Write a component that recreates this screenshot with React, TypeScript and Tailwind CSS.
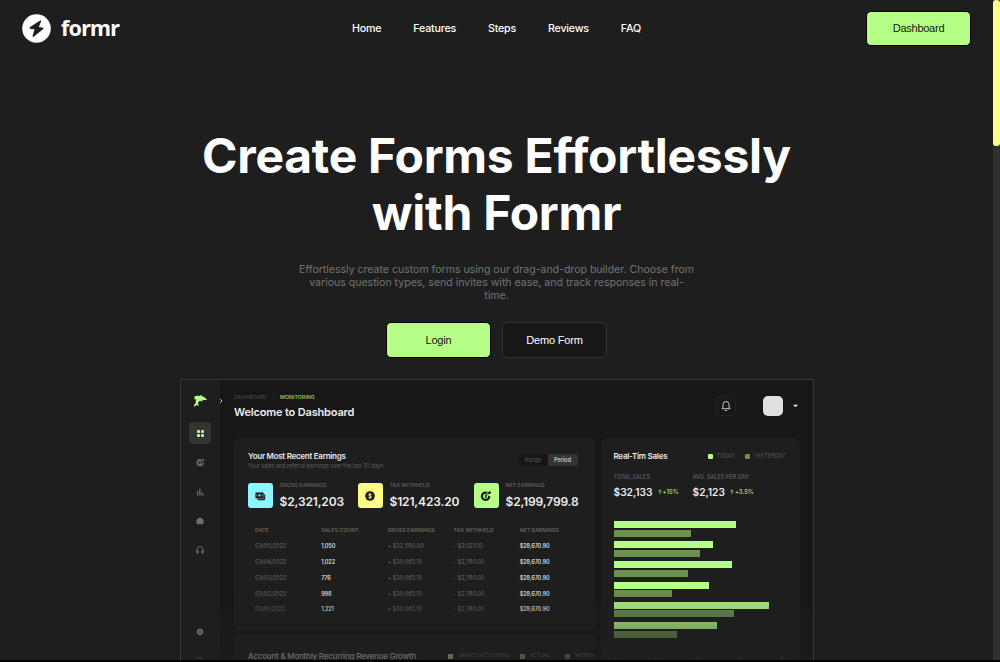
import React from "react";

const stats = [
  { label: "GROSS EARNINGS", value: "$2,321,203", box: "w-[110px]", tile: "bg-[#8df5ff]", icon: "cash" },
  { label: "TAX WITHHELD", value: "$121,423.20", box: "w-[116px]", tile: "bg-[#fbfb85]", icon: "coin" },
  { label: "NET EARNINGS", value: "$2,199,799.8", box: "w-[110px]", tile: "bg-[#b5ff86]", icon: "target" },
];

const rows = [
  ["03/05/2022", "1,050", "+ $32,580.00", "- $3,023.10", "$28,670.90"],
  ["03/04/2022", "1,022", "+ $30,065.10", "- $2,780.00", "$28,670.90"],
  ["03/03/2022", "776", "+ $30,065.10", "- $2,780.00", "$28,670.90"],
  ["03/02/2022", "998", "+ $30,065.10", "- $2,780.00", "$28,670.90"],
  ["03/01/2022", "1,221", "+ $30,065.10", "- $2,780.00", "$28,670.90"],
];

const bars = [
  { today: 122, yesterday: 77 },
  { today: 99, yesterday: 86 },
  { today: 118, yesterday: 74 },
  { today: 95.5, yesterday: 58.5 },
  { today: 155.5, yesterday: 120 },
  { today: 103.5, yesterday: 63.5 },
];

function Target({ className }: { className: string }) {
  return (
    <svg viewBox="0 0 12 12" className={className} fill="currentColor">
      <path fillRule="evenodd" d="M5.6 1.4A4.8 4.8 0 1 0 10.4 6.4L8 5.6A2.5 2.5 0 0 1 5.6 8.8 2.5 2.5 0 0 1 5.6 3.8L7 3.8 8 2Z" />
      <path d="M5 4.6h1.6v3.2H5zM8 3.7 8.2 2.2 10 .8l.3 1.1 1.2.4L10 4 8.6 4.1 7 5.6 6.5 5Z" />
    </svg>
  );
}

function StatIcon({ kind }: { kind: string }) {
  if (kind === "cash")
    return (
      <svg viewBox="0 0 12 12" className="size-[12px]">
        <rect x="3.2" y="4" width="8" height="6.2" rx="1.4" fill="#1e1e1e" />
        <rect x="1.2" y="2.2" width="8.6" height="6.4" rx="1.2" fill="#1e1e1e" stroke="#8df5ff" strokeWidth=".4" />
        <circle cx="5.5" cy="5.4" r="1.1" fill="#8df5ff" />
        <path d="M2.8 4.6v1.6M8.2 4.6v1.6" stroke="#8df5ff" strokeWidth=".6" />
      </svg>
    );
  if (kind === "coin")
    return (
      <svg viewBox="0 0 12 12" className="size-[12px]" fill="none">
        <circle cx="6" cy="6" r="4.8" fill="#1e1e1e" />
        <path d="M7.5 4.6C7.1 3.9 4.6 3.7 4.6 5c0 1.2 2.9.8 2.9 2.1 0 1.2-2.6 1.2-3 .2M6 3.1v5.8" stroke="#fbfb85" strokeWidth=".9" />
      </svg>
    );
  return <Target className="size-[12px] text-[#1e1e1e]" />;
}

function Header() {
  return (
    <header className="grid h-[57px] shrink-0 grid-cols-[1fr_auto_1fr] items-center pr-[22px] pl-[22px]">
      <div className="flex items-center gap-[10px]">
        <svg viewBox="0 0 30 30" className="size-[29px]">
          <circle cx="15" cy="15" r="14.8" fill="#fff" />
          <path d="M19.2 6.4 8 13.7v1.5l5 .5-2.2 7.5.9.5L22 15.4v-1.3l-4.6-.7L20 7Z" fill="#1e1e1e" />
        </svg>
        <span className="-mt-[2px] font-['Noto_Sans'] text-[21.5px] leading-[28px] font-bold tracking-[-0.8px] text-white">formr</span>
      </div>
      <nav className="flex gap-[32px] text-[10.7px] leading-[14px] font-medium tracking-[-0.22px] text-white">
        <a>Home</a>
        <a>Features</a>
        <a>Steps</a>
        <a>Reviews</a>
        <a>FAQ</a>
      </nav>
      <button className="h-[35px] w-[105px] justify-self-end rounded-[5px] border border-black bg-[#b5ff86] font-['Liberation_Sans'] text-[11px] tracking-[-0.25px] text-[#151515]">
        Dashboard
      </button>
    </header>
  );
}

function Hero() {
  return (
    <section className="flex flex-col items-center pt-[70px] text-center">
      <h1 className="text-[48px] leading-[57px] font-bold tracking-[-0.28px] text-white">
        <span className="block">Create Forms Effortlessly</span>
        <span className="block">with Formr</span>
      </h1>
      <p className="mt-[22px] text-[10.6px] leading-[13px] tracking-[-0.03px] whitespace-nowrap text-[#737373]">
        <span className="block">Effortlessly create custom forms using our drag-and-drop builder. Choose from</span>
        <span className="block">various question types, send invites with ease, and track responses in real-</span>
        <span className="block">time.</span>
      </p>
      <div className="mt-[20px] flex gap-[11px] font-['Liberation_Sans'] text-[11px] tracking-[-0.2px]">
        <button className="h-[36px] w-[105px] rounded-[5px] border border-black bg-[#b5ff86] text-[#151515]">Login</button>
        <button className="h-[36px] w-[105px] rounded-[5px] border border-[#363636] bg-[#171717] text-white">Demo Form</button>
      </div>
    </section>
  );
}

function Sidebar() {
  return (
    <aside className="flex w-[39px] shrink-0 flex-col items-center bg-[#1e1e1e] pt-[14px] text-[#6f6f6f]">
      <svg viewBox="0 0 14 14" className="size-[14px] shrink-0" fill="#b5ff86">
        <path d="M1.4 2.4C3 1.6 5 1.5 6.4 2L8.2 1 8.8 2.2C10.8 2.6 11.6 3.2 12 4l1.7 1-.2.9-3 .2-1.4.3.3 1.5-2-1.2C6.4 6.9 5.4 7.8 5 9.2l.9 2.9-2.3-1L.9 13l.3-2.3 1.5-1.6C2.6 7.2 2.8 6 3.4 5.2L1.6 5.6Z" />
      </svg>
      <div className="mt-[14px] flex size-[22px] shrink-0 items-center justify-center rounded-[3px] bg-[#353434]">
        <div className="grid grid-cols-2 gap-[1px]">
          <i className="size-[3px] rounded-[1px] bg-[#b5ff86]" />
          <i className="size-[3px] rounded-[1px] bg-[#b5ff86]" />
          <i className="size-[3px] rounded-[1px] bg-[#b5ff86]" />
          <i className="size-[3px] rounded-[1px] bg-[#b5ff86]" />
        </div>
      </div>
      <Target className="mt-[14px] size-[9px] shrink-0" />
      <svg viewBox="0 0 8 8" className="mt-[21px] size-[8px] shrink-0" fill="currentColor">
        <path d="M1 3h1.2v4.4H1zM3.3.8h1.2v6.6H3.3zM5.5 4.4h1.2v3H5.5zM7.1 6.3h.8v1.1h-.8z" />
      </svg>
      <svg viewBox="0 0 8 8" className="mt-[21px] size-[8px] shrink-0" fill="currentColor">
        <path d="M2.4 2V.8h3.2V2h1L7.6 3v3L6.6 7.2H1.4L.4 6V3l1-1Z" />
      </svg>
      <svg viewBox="0 0 8 8" className="mt-[21px] size-[8px] shrink-0" fill="currentColor">
        <path d="M.7 5V4a3.3 3.3 0 0 1 6.6 0v1" fill="none" stroke="currentColor" strokeWidth=".9" />
        <rect x=".4" y="4.2" width="2.2" height="3.2" rx=".7" />
        <rect x="5.4" y="4.2" width="2.2" height="3.2" rx=".7" />
      </svg>
      <svg viewBox="0 0 8 8" className="mt-[74px] size-[8px] shrink-0" fill="#909090">
        <path d="m4 .4 1.2.5 1.4.3.3 1.4.7 1.3-.7 1.3-.3 1.4-1.4.4L4 7.6 2.8 7l-1.4-.4-.3-1.4L.4 3.9l.7-1.3.3-1.4L2.8.9Z" />
        <circle cx="4" cy="4" r="1" fill="#555" />
      </svg>
      <svg viewBox="0 0 8 8" className="mt-[20px] size-[8px] shrink-0" fill="none" stroke="currentColor">
        <path d="M1 2.5V1.5h4.4L7 3.2v4" />
      </svg>
    </aside>
  );
}

function TopBar() {
  return (
    <div className="flex h-[58px] justify-between pr-[15px] pl-[14.5px]">
      <div className="pt-[13px]">
        <div className="flex h-[8px] text-[5.3px] leading-[8px]">
          <span className="w-[39px] text-[#4c4c4c]">DASHBOARD</span>
          <span className="w-[7px] text-[#4c4c4c]">/</span>
          <span className="font-semibold text-[#8cc169]">MONITORING</span>
        </div>
        <div className="mt-[4px] text-[11px] leading-[14px] font-semibold tracking-[-0.17px] text-[#eeeeee]">Welcome to Dashboard</div>
      </div>
      <div className="mt-[16px] flex h-[20px] items-center">
        <div className="flex size-[20px] items-center justify-center rounded-[4px] border border-[#242424]">
          <svg viewBox="0 0 12 12" className="size-[12px]" fill="none" stroke="#c6c6c6" strokeWidth="1">
            <path d="M2 8.7h8L9 7.2V4.5a3 3 0 0 0-6 0v2.7Z" strokeLinejoin="round" />
            <path d="M4.8 10.5h2.4" />
          </svg>
        </div>
        <div className="ml-[27px] size-[20px] rounded-[5px] bg-[#e0e0e0]" />
        <svg viewBox="0 0 6 4" className="ml-[10px] h-[4px] w-[5px]">
          <path d="M0 .4h6L3 3.6Z" fill="#eee" />
        </svg>
      </div>
    </div>
  );
}

function Earnings() {
  return (
    <div className="h-[193px] w-[361px] rounded-[6px] bg-[#1e1e1e] pt-[12px] pl-[14px]">
      <div className="flex h-[20px] justify-between pr-[17px]">
        <div className="pl-[0.5px]">
          <div className="text-[8px] leading-[12px] font-semibold tracking-[-0.27px] text-[#e8e8e8]">Your Most Recent Earnings</div>
          <div className="text-[5.5px] leading-[9px] tracking-[-0.06px] text-[#5c5c5c]">Your sales and referral earnings over the last 30 days</div>
        </div>
        <div className="mt-[4px] flex h-[12px] overflow-hidden rounded-[2px] bg-[#161616] text-[5.5px] leading-[12px]">
          <span className="w-[29px] text-center text-[#555]">Range</span>
          <span className="w-[30px] bg-[#353434] text-center font-semibold text-[#c4c4c4]">Period</span>
        </div>
      </div>
      <div className="mt-[13px] flex">
        {stats.map((s) => (
          <div key={s.label} className={`flex gap-[7px] ${s.box}`}>
            <div className={`flex size-[25px] shrink-0 items-center justify-center rounded-[3px] ${s.tile}`}>
              <StatIcon kind={s.icon} />
            </div>
            <div className="-mt-px whitespace-nowrap">
              <div className="text-[5.3px] leading-[7px] font-medium text-[#626262]">{s.label}</div>
              <div className="mt-[5px] text-[12px] leading-[16px] font-semibold tracking-[-0.14px] text-[#ededed]">{s.value}</div>
            </div>
          </div>
        ))}
      </div>
      <div className="mt-[12.5px] pl-[7.5px]">
        <div className="grid h-[16px] grid-cols-[repeat(5,66.2px)] items-center text-[5.3px] font-medium text-[#6d6d6d]">
          <span>DATE</span>
          <span>SALES COUNT</span>
          <span>GROSS EARNINGS</span>
          <span>TAX WITHHELD</span>
          <span>NET EARNINGS</span>
        </div>
        {rows.map((r) => (
          <div key={r[0]} className="grid h-[15.75px] grid-cols-[repeat(5,66.2px)] items-center text-[5.5px] text-[#6a6a6a]">
            <span>{r[0]}</span>
            <span className="font-semibold tracking-[-0.13px] text-[#dedede]">{r[1]}</span>
            <span className="tracking-[0.08px]">{r[2]}</span>
            <span>{r[3]}</span>
            <span className="font-semibold tracking-[-0.13px] text-[#dedede]">{r[4]}</span>
          </div>
        ))}
      </div>
    </div>
  );
}

function Figure({ label, value, delta, box }: { label: string; value: string; delta: string; box: string }) {
  return (
    <div className={`whitespace-nowrap ${box}`}>
      <div className="text-[5.5px] leading-[8px] font-medium text-[#626262]">{label}</div>
      <div className="mt-[4px] flex items-center gap-[5px]">
        <span className="text-[10.2px] leading-[14px] font-semibold text-[#ededed]">{value}</span>
        <span className="flex items-center gap-[1px] text-[6px] font-semibold tracking-[-0.1px] text-[#9bd975]">
          <svg viewBox="0 0 4 5" className="h-[5px] w-[4px]" fill="none" stroke="currentColor" strokeWidth=".8">
            <path d="M2 5V.8M.4 2.4 2 .8l1.6 1.6" />
          </svg>
          {delta}
        </span>
      </div>
    </div>
  );
}

function Sales() {
  return (
    <div className="h-[223px] w-[199px] rounded-t-[6px] bg-[#1e1e1e] pt-[12px] pl-[13px]">
      <div className="flex h-[12px] items-center text-[5.5px] text-[#555]">
        <span className="w-[94px] text-[8px] leading-[12px] font-semibold tracking-[-0.25px] text-[#e8e8e8]">Real-Tim Sales</span>
        <i className="mr-[4px] size-[5px] rounded-[1px] bg-[#b5ff86]" />
        <span className="w-[28px]">TODAY</span>
        <i className="mr-[4px] size-[5px] rounded-[1px] bg-[#6a914f]" />
        <span>YESTERDAY</span>
      </div>
      <div className="mt-[10.5px] flex">
        <Figure label="TOTAL SALES" value="$32,133" delta="+15%" box="w-[79px]" />
        <Figure label="AVG. SALES PER DAY" value="$2,123" delta="+3.5%" box="w-[90px]" />
      </div>
      <div className="mt-[22.5px] flex flex-col gap-[4.6px]">
        {bars.map((b, i) => (
          <div key={i} className="flex flex-col gap-[1.6px]">
            <div className="h-[7px] bg-[#b5ff86]" style={{ width: b.today }} />
            <div className="h-[7px] bg-[#6a914f]" style={{ width: b.yesterday }} />
          </div>
        ))}
      </div>
      <div className="mt-[17px] flex text-[5px] leading-[6px] text-[#4a4a4a]">
        <span className="w-[40px]">0</span>
        <span className="w-[42px]">20</span>
        <span className="w-[42px]">40</span>
        <span className="w-[42px]">60</span>
        <span>80</span>
      </div>
    </div>
  );
}

function Preview() {
  return (
    <div className="relative mt-[21px] flex h-[282px] w-[634px] shrink-0 self-center overflow-hidden border border-b-0 border-[#383838] bg-[#171717]">
      <Sidebar />
      <div className="w-[593px] shrink-0">
        <TopBar />
        <div className="flex gap-[6px] pl-[14px]">
          <div className="flex flex-col gap-[4px]">
            <Earnings />
            <div className="flex h-[40px] w-[361px] items-center bg-[#1e1e1e] pt-[2px] pl-[14.5px] text-[5px] text-[#777]">
              <span className="w-[200px] text-[8px] leading-[12px] font-medium tracking-[-0.22px] whitespace-nowrap text-[#e8e8e8]">Account &amp; Monthly Recurring Revenue Growth</span>
              <i className="mr-[5px] size-[5px] bg-[#b5ff86]" />
              <span className="w-[62px] text-[4.6px] tracking-[-0.1px] whitespace-nowrap">GROWTH ACCOUNTING</span>
              <i className="mr-[5px] size-[5px] bg-[#8fc46d]" />
              <span className="w-[35px]">ACTUAL</span>
              <i className="mr-[5px] size-[5px] bg-[#6a914f]" />
              <span>MONTH</span>
            </div>
          </div>
          <Sales />
        </div>
      </div>
      <svg viewBox="0 0 4 6" className="absolute top-[18px] left-[38px] h-[6px] w-[4px]" fill="none" stroke="#bbb">
        <path d="m1 1 2 2-2 2" />
      </svg>
      <div className="absolute inset-x-0 bottom-0 h-[72px] bg-linear-to-b from-transparent to-[#1e1e1e]/68" />
    </div>
  );
}

export default function App() {
  return (
    <div className="flex h-[662px] w-[1000px] overflow-hidden border-b-2 border-black bg-[#1e1e1e] font-['Inter',sans-serif]">
      <main className="flex w-[993px] flex-col">
        <Header />
        <Hero />
        <Preview />
      </main>
      <div className="w-[7px] bg-[#303030]">
        <div className="h-[146px] rounded-[3px] bg-[#fbfb85]" />
      </div>
    </div>
  );
}
